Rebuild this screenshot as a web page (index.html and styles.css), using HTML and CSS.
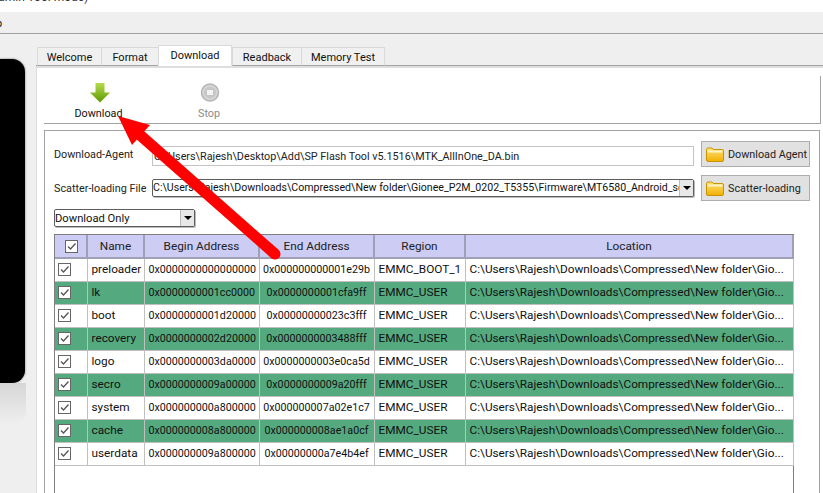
FILE: index.html
```html
<!DOCTYPE html>
<html lang="en">
<head>
<meta charset="utf-8">
<title>SP Flash Tool</title>
<link rel="stylesheet" href="styles.css">
</head>
<body>
<div class="app">
  <div class="titlebar"><span class="title-text">(Admin Tool mode)</span></div>
  <div class="menubar"><span class="menu-item">p</span></div>
  <div class="main">
    <aside class="side"><div class="phone"></div><div class="phone-glow"></div></aside>
    <section class="work">
      <nav class="tabs">
        <span class="tab t1">Welcome</span>
        <span class="tab t2">Format</span>
        <span class="tab active">Download</span>
        <span class="tab t4">Readback</span>
        <span class="tab t5">Memory Test</span>
      </nav>
      <div class="pane">
        <div class="toolbar">
          <div class="tool dl">
            <svg class="tool-icon" width="22" height="22" viewBox="0 0 22 22"><defs><linearGradient id="ga" x1="0" y1="0" x2="0" y2="1"><stop offset="0" stop-color="#b6dc4e"/><stop offset="1" stop-color="#5c9a00"/></linearGradient></defs><path d="M6.500 1h9v9.500h5.500L11 20.500 1 10.500h5.500z" fill="url(#ga)"/></svg>
            <span>Download</span>
          </div>
          <div class="tool stop">
            <svg class="tool-icon" width="22" height="22" viewBox="0 0 22 22"><circle cx="11" cy="10.500" r="8.500" fill="#d6d6d6" stroke="#b4b4b4" stroke-width="1.500"/><circle cx="11" cy="10.500" r="6" fill="#c8c8c8"/><rect x="7.500" y="7.500" width="7" height="6" rx="1" fill="#f4f4f4" stroke="#aaa" stroke-width=".5"/></svg>
            <span>Stop</span>
          </div>
        </div>
        <div class="group">
          <div class="form-grid">
            <label class="lbl lbl-a">Download-Agent</label>
            <div class="field">C:\Users\Rajesh\Desktop\Add\SP Flash Tool v5.1516\MTK_AllInOne_DA.bin</div>
            <button class="fbtn"><svg width="18" height="15" viewBox="0 0 18 15"><use href="#folder"/></svg>Download Agent</button>
            <label class="lbl">Scatter-loading File</label>
            <div class="combo wide"><span class="combo-text">C:\Users\Rajesh\Downloads\Compressed\New folder\Gionee_P2M_0202_T5355\Firmware\MT6580_Android_scatter.txt</span><span class="drop"></span></div>
            <button class="fbtn"><svg width="18" height="15" viewBox="0 0 18 15"><use href="#folder"/></svg>Scatter-loading</button>
          </div>
          <div class="combo mode"><span class="combo-text">Download Only</span><span class="drop"></span></div>
          <div class="table-box">
            <table class="parts">
              <colgroup><col class="c0"><col class="c1"><col class="c2"><col class="c3"><col class="c4"><col class="c5"></colgroup>
              <thead><tr><th><span class="cb"></span></th><th>Name</th><th>Begin Address</th><th>End Address</th><th>Region</th><th>Location</th></tr></thead>
              <tbody id="rows">
                <tr><td><span class="cb"></span></td><td>preloader</td><td class="addr">0x0000000000000000</td><td class="addr ctr">0x000000000001e29b</td><td>EMMC_BOOT_1</td><td>C:\Users\Rajesh\Downloads\Compressed\New folder\Gio...</td></tr>
                <tr class="alt"><td><span class="cb"></span></td><td>lk</td><td class="addr">0x0000000001cc0000</td><td class="addr ctr">0x0000000001cfa9ff</td><td>EMMC_USER</td><td>C:\Users\Rajesh\Downloads\Compressed\New folder\Gio...</td></tr>
                <tr><td><span class="cb"></span></td><td>boot</td><td class="addr">0x0000000001d20000</td><td class="addr ctr">0x00000000023c3fff</td><td>EMMC_USER</td><td>C:\Users\Rajesh\Downloads\Compressed\New folder\Gio...</td></tr>
                <tr class="alt"><td><span class="cb"></span></td><td>recovery</td><td class="addr">0x0000000002d20000</td><td class="addr ctr">0x0000000003488fff</td><td>EMMC_USER</td><td>C:\Users\Rajesh\Downloads\Compressed\New folder\Gio...</td></tr>
                <tr><td><span class="cb"></span></td><td>logo</td><td class="addr">0x0000000003da0000</td><td class="addr ctr">0x0000000003e0ca5d</td><td>EMMC_USER</td><td>C:\Users\Rajesh\Downloads\Compressed\New folder\Gio...</td></tr>
                <tr class="alt"><td><span class="cb"></span></td><td>secro</td><td class="addr">0x0000000009a00000</td><td class="addr ctr">0x0000000009a20fff</td><td>EMMC_USER</td><td>C:\Users\Rajesh\Downloads\Compressed\New folder\Gio...</td></tr>
                <tr><td><span class="cb"></span></td><td>system</td><td class="addr">0x000000000a800000</td><td class="addr ctr">0x000000007a02e1c7</td><td>EMMC_USER</td><td>C:\Users\Rajesh\Downloads\Compressed\New folder\Gio...</td></tr>
                <tr class="alt"><td><span class="cb"></span></td><td>cache</td><td class="addr">0x000000008a800000</td><td class="addr ctr">0x000000008ae1a0cf</td><td>EMMC_USER</td><td>C:\Users\Rajesh\Downloads\Compressed\New folder\Gio...</td></tr>
                <tr><td><span class="cb"></span></td><td>userdata</td><td class="addr">0x000000009a800000</td><td class="addr ctr">0x00000000a7e4b4ef</td><td>EMMC_USER</td><td>C:\Users\Rajesh\Downloads\Compressed\New folder\Gio...</td></tr>
              </tbody>
            </table>
          </div>
        </div>
      </div>
    </section>
  </div>
  <svg class="defs" width="0" height="0"><defs>
    <linearGradient id="gf" x1="0" y1="0" x2="0" y2="1"><stop offset="0" stop-color="#ffe27a"/><stop offset="1" stop-color="#f2b000"/></linearGradient>
    <symbol id="folder" viewBox="0 0 18 15"><path d="M.5 2.500Q.5 1 2 1h4l1.500 1.500H16Q17.500 2.500 17.500 4v9q0 1.500-1.500 1.500H2Q.5 14.500.5 13z" fill="url(#gf)" stroke="#c79300"/><rect x="1.500" y="3.500" width="15" height="2" fill="#fff3c4"/></symbol>
  </defs></svg>
  <svg class="arrow" width="823" height="493" viewBox="0 0 823 493"><path d="M140 135L275 254" stroke="#f00" stroke-width="11" stroke-linecap="round" fill="none"/><path d="M118 116L150 125 132 145z" fill="#f00"/></svg>
</div>
</body>
</html>
```
FILE: styles.css
```css
* { box-sizing: border-box; }
html, body { margin: 0; padding: 0; height: 100%; overflow: hidden; background: #fff; }
body { font: 10.8px/1 Roboto, "Noto Sans", sans-serif; color: #111; }
.app { position: relative; width: 823px; height: 493px; overflow: hidden; display: flex; flex-direction: column; }
.titlebar { height: 12px; background: #fff; overflow: hidden; flex: none; }
.title-text { display: block; margin: -11px 0 0 -14px; font-size: 12px; line-height: 16px; color: #333; }
.menubar { height: 22px; flex: none; background: #efefef; border-bottom: 1px solid #a0a0a0; padding: 6px 0 0 0; overflow: hidden; }
.menu-item { display: block; margin-left: -4px; font-size: 11px; }
.main { flex: 1; display: flex; min-height: 0; background: #efefef; }
.side { width: 35px; flex: none; position: relative; overflow: hidden; padding-top: 25px; }
.phone { width: 25px; height: 324px; background: #000; border-radius: 0 13px 13px 0; box-shadow: 0 0 2px #555; }
.phone-glow { width: 26px; height: 42px; background: linear-gradient(#d6d6d6, #efefef); border-radius: 0 0 14px 0; }
.work { flex: 1; display: flex; flex-direction: column; min-width: 0; padding-left: 1px; }
.tabs { height: 32px; flex: none; display: flex; align-items: flex-end; padding-left: 1px; border-bottom: 1px solid #a3a3a3; }
.tab { height: 19px; margin-bottom: -1px; display: flex; align-items: center; justify-content: center; padding-top: 1px; background: #f0f0f0; border: 1px solid #d9d9d9; border-right: 0; border-bottom: 1px solid #a3a3a3; font-size: 11px; }
.t1 { width: 64px; } .t2 { width: 57px; } .t4 { width: 69px; }
.t5 { width: 84px; border-right: 1px solid #d9d9d9; }
.tab.active { width: 74px; height: 21px; background: #fff; border: 1px solid #d9d9d9; border-bottom: 1px solid #fff; padding-top: 0; }
.pane { flex: 1; min-height: 0; background: #fff; border-left: 1px solid #dcdcdc; border-top: 2px solid #dedede; padding: 0 2px 0 7px; }
.toolbar { height: 56px; display: flex; border-bottom: 1px solid #a3a3a3; position: relative; }
.toolbar::after { content: ""; position: absolute; right: 0; top: 8px; bottom: 0; width: 1px; background: #a3a3a3; }
.tool { display: flex; flex-direction: column; align-items: center; gap: 5px; padding-top: 14px; }
.tool.dl { width: 109px; color: #111; }
.tool.stop { width: 112px; color: #8a8a8a; }
.tool-icon { display: block; margin-left: 2px; }
.group { margin-top: 6px; margin-right: 1px; height: 380px; border: 1px solid #a3a3a3; padding: 10px 9px 0 9px; }
.form-grid { display: grid; grid-template-columns: 98px 542px 116px; row-gap: 8px; align-items: center; width: 765px; }
.form-grid .fbtn { margin-left: 7px; }
.lbl { white-space: nowrap; color: #222; padding-top: 3px; }
.field { height: 20px; margin-top: 3px; border: 1px solid #c4c4c4; padding: 5px 0 0 1px; white-space: nowrap; overflow: hidden; color: #222; }
.combo { position: relative; display: flex; align-items: center; border: 1px solid #5c5c5c; border-radius: 2px; background: #fff; height: 18px; overflow: hidden; box-shadow: 1px 1px 0 #bbb; }
.combo-text { flex: 1; min-width: 0; white-space: nowrap; overflow: hidden; padding: 1px 0 0 0; font-size: 10.6px; }
.drop { flex: none; width: 14px; height: 16px; background: #e8e8e8; border-left: 1px solid #bbb; position: relative; }
.drop::after { content: ""; position: absolute; left: 3px; top: 6px; border: 4px solid transparent; border-top: 4px solid #000; border-bottom: 0; }
.mode { width: 141px; margin-top: 8px; }
.mode .combo-text { font-size: 11.2px; }
.fbtn { width: 109px; height: 26px; padding: 2px 0 0 4px; display: flex; align-items: center; gap: 4px; background: #e1e1e1; border: 1px solid #adadad; font: inherit; color: #222; white-space: nowrap; }
.fbtn svg { margin-top: -2px; }
.table-box { width: 740px; height: 300px; margin-top: 7px; border-left: 1px solid #808080; border-right: 1px solid #808080; border-top: 1px solid #808080; }
.parts { border-collapse: collapse; table-layout: fixed; width: 738px; }
.c0 { width: 32px; } .c1 { width: 57px; } .c2 { width: 115px; } .c3 { width: 115px; } .c4 { width: 91px; } .c5 { width: 328px; }
.parts th { height: 23px; background: #ccccf5; border: 1px solid #9f9fb5; border-width: 0 2px 2px 0; font-weight: 400; text-align: center; padding: 1px 0 0; font-size: 11.8px; color: #222; }
.parts td { height: 23px; border-right: 1px solid #c0c0c0; border-bottom: 1px solid #c0c0c0; padding: 1px 0 0 4px; white-space: nowrap; overflow: hidden; font-size: 11.8px; }
.parts td:first-child { padding: 0 0 0 2px; }
.parts td.addr { font-size: 10.7px; }
.parts td.ctr { text-align: center; padding-left: 0; }
.alt td { background: #55a97f; }
.cb { display: block; width: 13px; height: 13px; margin-left: 1px; border: 1px solid #666; background: #fff url("data:image/svg+xml,%3Csvg xmlns='http://www.w3.org/2000/svg' width='11' height='11'%3E%3Cpath d='M2 5.500l2.500 2.500 5-5.500' fill='none' stroke='%23555' stroke-width='1.300'/%3E%3C/svg%3E") no-repeat center; }
th .cb { margin-left: 10px; }
.defs { position: absolute; }
.arrow { position: absolute; left: 0; top: 0; pointer-events: none; }
```
